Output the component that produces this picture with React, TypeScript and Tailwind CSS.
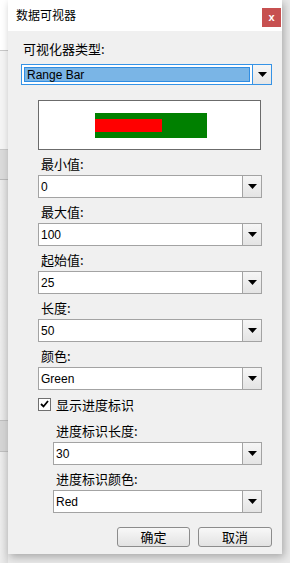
import React from 'react';

const cjk = { fontFamily: '"Noto Sans CJK SC", "Noto Sans", sans-serif' };
const latin = { fontFamily: '"Liberation Sans", Arial, "Noto Sans CJK SC", sans-serif' };

function Arrow() {
  return (
    <svg width="9" height="5" viewBox="0 0 9 5">
      <path d="M0 0 H9 L4.5 5 Z" fill="#000" />
    </svg>
  );
}

function Combo({ value, indent = false }: { value: string; indent?: boolean }) {
  return (
    <div className={`flex h-[23px] border border-[#a3a3a3] bg-white ${indent ? 'ml-[53px]' : 'ml-[38px]'} w-auto mr-[20px]`}>
      <div className="flex-1 flex items-center pl-[2px] text-[12px] text-black" style={latin}>
        {value}
      </div>
      <div className="w-[19px] flex items-center justify-center border-l border-[#a3a3a3] bg-gradient-to-b from-[#f6f6f6] to-[#e4e4e4]">
        <Arrow />
      </div>
    </div>
  );
}

function Label({ text, indent = false }: { text: string; indent?: boolean }) {
  return (
    <div
      className={`h-[25px] pt-[6px] leading-[15px] text-[13px] text-black ${indent ? 'pl-[56px]' : 'pl-[41px]'}`}
      style={cjk}
    >
      {text}
    </div>
  );
}

export default function App() {
  return (
    <div className="w-[290px] h-[563px] bg-[#e9e9e9] flex overflow-hidden">
      {/* background strip on the left */}
      <div className="w-[8px] h-full bg-gradient-to-r from-[#ececec] to-[#dcdcdc] flex flex-col">
        <div className="h-[50px] bg-white" />
        <div className="h-[100px] border-y border-[#c8c8c8] bg-[#f4f4f4]" />
        <div className="h-[30px] bg-[#dadada] border-b border-[#b9b9b9]" />
        <div className="h-[240px]" />
        <div className="h-[32px] bg-[#d4d4d4] border-y border-[#bdbdbd]" />
      </div>

      <div className="w-[274px] h-[554px] bg-[#f0f0f0] flex flex-col shadow-[2px_3px_8px_rgba(0,0,0,0.28)]">
        {/* title bar */}
        <div className="h-[31px] bg-white flex items-start justify-between">
          <div className="pl-[8px] pt-[7px] text-[12px] leading-[16px] text-black" style={cjk}>
            数据可视器
          </div>
          <div className="mt-[8px] mr-[1px] w-[19px] h-[19px] bg-[#c75050] flex items-center justify-center text-white text-[11px] font-bold" style={latin}>
            x
          </div>
        </div>

        {/* visualizer type */}
        <div className="pl-[15px] pt-[9px] h-[33px] leading-[17px] text-[13px] text-black" style={cjk}>
          可视化器类型:
        </div>
        <div className="ml-[13px] mr-[10px] h-[21px] flex border border-[#3593e6] bg-white">
          <div className="flex-1 p-[2px] flex">
            <div className="flex-1 bg-[#7ab5e6] border border-[#2f8de3] flex items-center pl-[2px] text-[12px] text-black" style={latin}>
              Range Bar
            </div>
          </div>
          <div className="w-[19px] flex items-center justify-center border-l border-[#3593e6] bg-gradient-to-b from-[#f6f6f6] to-[#e6e6e6]">
            <Arrow />
          </div>
        </div>

        {/* preview */}
        <div className="mt-[15px] ml-[30px] mr-[21px] h-[50px] bg-white border border-[#6b6b6b] flex items-center pl-[56px]">
          <div className="w-[112px] h-[25px] bg-[#008000] flex items-center">
            <div className="w-[67px] h-[13px] bg-[#ff0000]" />
          </div>
        </div>

        <div className="-ml-[8px] flex flex-col">
          <Label text="最小值:" />
          <Combo value="0" />
          <Label text="最大值:" />
          <Combo value="100" />
          <Label text="起始值:" />
          <Combo value="25" />
          <Label text="长度:" />
          <Combo value="50" />
          <Label text="颜色:" />
          <Combo value="Green" />

          <div className="mt-[7px] ml-[38px] h-[14px] flex items-center gap-[5px]">
            <div className="w-[13px] h-[13px] border border-[#707070] bg-white flex items-center justify-center">
              <svg width="9" height="8" viewBox="0 0 9 8">
                <path d="M1 4 L3.5 6.5 L8 1" stroke="#000" strokeWidth="1.8" fill="none" />
              </svg>
            </div>
            <span className="text-[13px] leading-[15px] text-black" style={cjk}>
              显示进度标识
            </span>
          </div>

          <div className="h-[6px]" />
          <Label text="进度标识长度:" indent />
          <Combo value="30" indent />
          <Label text="进度标识颜色:" indent />
          <Combo value="Red" indent />

          <div className="mt-[14px] flex justify-end gap-[8px] mr-[10px]">
            <button className="w-[73px] h-[20px] border border-[#8c8c8c] rounded-[3px] bg-gradient-to-b from-[#f8f8f8] to-[#e2e2e2] text-[13px] leading-[16px] text-black" style={cjk}>
              确定
            </button>
            <button className="w-[74px] h-[20px] border border-[#8c8c8c] rounded-[3px] bg-gradient-to-b from-[#f8f8f8] to-[#e2e2e2] text-[13px] leading-[16px] text-black" style={cjk}>
              取消
            </button>
          </div>
        </div>
      </div>
    </div>
  );
}
